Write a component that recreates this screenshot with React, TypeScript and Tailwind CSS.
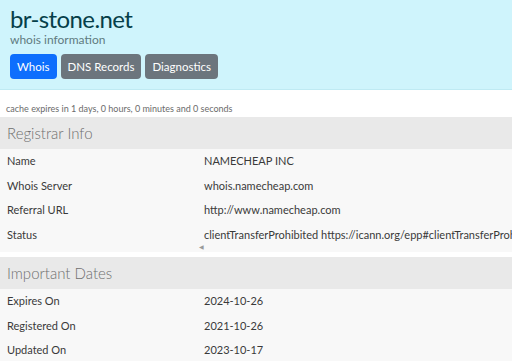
const registrar = [
  { label: "Name", value: "NAMECHEAP INC" },
  { label: "Whois Server", value: "whois.namecheap.com" },
  { label: "Referral URL", value: "http://www.namecheap.com" },
  {
    label: "Status",
    value:
      "clientTransferProhibited https://icann.org/epp#clientTransferProhibited",
  },
];

const dates = [
  { label: "Expires On", value: "2024-10-26" },
  { label: "Registered On", value: "2021-10-26" },
  { label: "Updated On", value: "2023-10-17" },
];

function Section({
  title,
  rows,
  scroll,
}: {
  title: string;
  rows: { label: string; value: string }[];
  scroll?: boolean;
}) {
  return (
    <div>
      <div className="h-[32px] bg-[#e9e9e9] px-[7px] flex items-center text-[15px] font-light text-[#6f6f6f]">
        {title}
      </div>
      <div className="bg-[#f8f8f8]">
        {rows.map((r) => (
          <div
            key={r.label}
            className="h-[24.5px] flex items-center text-[11px] text-[#3a3a3a] whitespace-nowrap"
          >
            <div className="w-[204px] shrink-0 pl-[7px]">{r.label}</div>
            <div>{r.value}</div>
          </div>
        ))}
        {scroll && (
          <div className="h-[5px] relative">
            <span className="absolute left-[199px] -top-[4px] text-[6px] leading-[8px] text-[#999]">
              ◀
            </span>
          </div>
        )}
      </div>
    </div>
  );
}

export default function App() {
  return (
    <div className="w-[512px] h-[361px] overflow-hidden bg-white font-['Lato',sans-serif]">
      {/* Header */}
      <div className="h-[90px] bg-[#cff4fc] pl-[10px] pt-[4px] border-b border-[#bfeaf3]">
        <h1 className="text-[24px] leading-[30px] tracking-[-0.6px] text-[#063f4a]">
          br-stone.net
        </h1>
        <p className="text-[12px] leading-[12px] text-[#5f7b80]">whois information</p>
        <div className="flex gap-[4px] mt-[8px]">
          <button className="h-[25px] px-[7px] rounded-[4px] bg-[#0d6efd] text-white text-[11.5px]">
            Whois
          </button>
          <button className="h-[25px] px-[7px] rounded-[4px] bg-[#6c757d] text-white text-[11.5px]">
            DNS Records
          </button>
          <button className="h-[25px] px-[7px] rounded-[4px] bg-[#6c757d] text-white text-[11.5px]">
            Diagnostics
          </button>
        </div>
      </div>

      <div className="h-[27px] pl-[6px] pt-[13px] text-[9px] leading-[12px] text-[#6b6b6b]">
        cache expires in 1 days, 0 hours, 0 minutes and 0 seconds
      </div>

      <Section title="Registrar Info" rows={registrar} scroll />
      <div className="h-[5px] bg-white" />
      <Section title="Important Dates" rows={dates} />
    </div>
  );
}
